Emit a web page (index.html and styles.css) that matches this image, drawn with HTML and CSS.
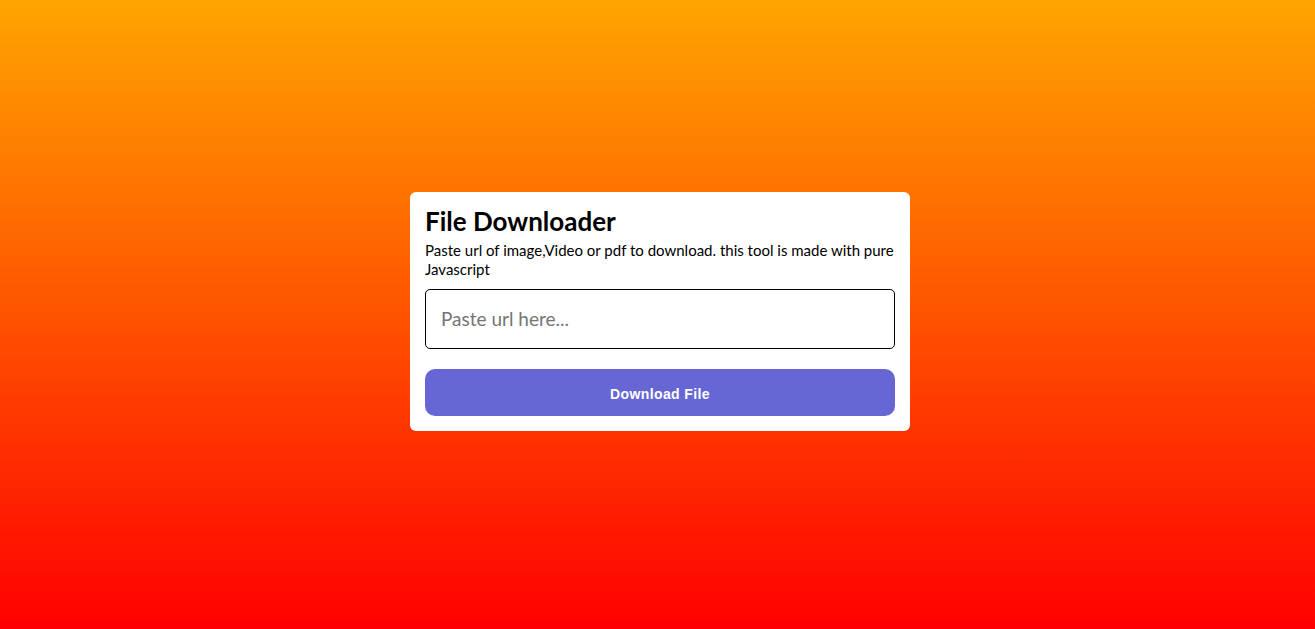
FILE: index.html
```html
<!DOCTYPE html>
<html lang="en">
<head>
<meta charset="utf-8">
<title>File Downloader</title>
<link rel="stylesheet" href="styles.css">
</head>
<body>
<div class="wrapper">
  <h1 class="title">File Downloader</h1>
  <p class="desc">Paste url of image,Video or pdf to download. this tool is made with pure Javascript</p>
  <form class="form" onsubmit="return false">
    <input class="url" type="url" placeholder="Paste url here..." autofocus>
    <button class="btn" type="button">Download File</button>
  </form>
</div>
</body>
</html>
```
FILE: styles.css
```css
* { box-sizing: border-box; margin: 0; padding: 0; }
html, body { height: 100%; }
body {
  display: flex;
  align-items: center;
  justify-content: center;
  padding-left: 5px;
  background: linear-gradient(#ffa500, #ff0000);
  font-family: Lato, "Noto Sans", sans-serif;
  color: #000;
}
.wrapper {
  width: 500px;
  background: #fff;
  border-radius: 6px;
  padding: 15px;
  margin-top: -7px;
}
.title {
  font-size: 26px;
  font-weight: 700;
  line-height: 28px;
}
.desc {
  font-size: 15px;
  line-height: 19px;
  margin-top: 6px;
}
.form {
  display: flex;
  flex-direction: column;
  gap: 20px;
  margin-top: 10px;
}
.url {
  height: 60px;
  width: 100%;
  border: 1px solid #000;
  border-radius: 5px;
  padding: 0 15px;
  font-family: Lato, "Noto Sans", sans-serif;
  font-size: 19px;
  outline: none;
}
.url::placeholder { color: #757575; }
.btn {
  height: 47px;
  width: 100%;
  border: none;
  border-radius: 10px;
  background: #6666d4;
  color: #fff;
  font-family: "Liberation Sans", Arial, sans-serif;
  font-weight: 700;
  font-size: 14px;
  letter-spacing: 0.4px;
  padding-top: 3px;
  cursor: pointer;
}
```
